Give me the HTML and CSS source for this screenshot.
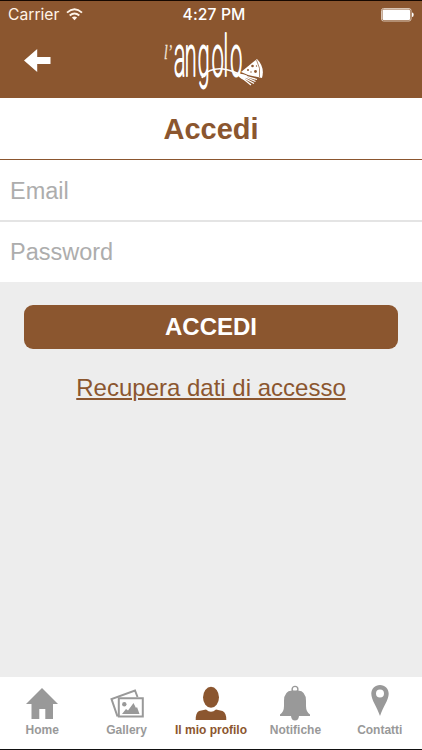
FILE: index.html
```html
<!DOCTYPE html>
<html lang="it">
<head>
<meta charset="utf-8">
<meta name="viewport" content="width=device-width, initial-scale=1">
<title>Accedi</title>
<link rel="stylesheet" href="styles.css">
</head>
<body>
<div class="app">
  <header class="header">
    <div class="status">
      <div class="carrier"><span>Carrier</span>
        <svg width="17" height="13" viewBox="0 0 17 13" fill="none" stroke="currentColor" stroke-width="1.9"><path d="M1 4.6Q8.500-1.900 16 4.600M3.700 7.500Q8.500 3.500 13.300 7.500"/><path d="M5.900 9.500Q8.500 7.400 11.100 9.500L8.500 12.200Z" fill="currentColor" stroke="none"/></svg>
      </div>
      <time class="clock">4:27 PM</time>
      <div class="battery"><svg width="33" height="14" viewBox="0 0 33 14"><rect x=".5" y=".5" width="29.500" height="12.500" rx="2" fill="none" stroke="#d9c5b5"/><rect x="1.500" y="1.500" width="27.500" height="10.500" rx="1" fill="#fff"/><path d="M31 4.500q1.700 0 1.700 2.250T31 9z" fill="#fff"/></svg></div>
    </div>
    <div class="navbar">
      <a class="back" href="#" aria-label="Indietro"><svg width="27" height="24" viewBox="0 0 27 24" fill="#fff"><path d="M0 11.500 13.200 0V8H26.500V15H13.200V23Z"/></svg></a>
      <svg class="logo" width="102" height="60" viewBox="0 0 102 60">
        <text class="logo-l" x="0" y="31" textLength="8" lengthAdjust="spacingAndGlyphs">l’</text>
        <text class="logo-name" transform="translate(0 48) scale(.37 1)" x="27 56 91 129 161 179">angolo</text>
        <path d="M38 50C41 43 50 40 59 41C66 42 72 44 79 48" fill="none" stroke="#fff" stroke-width="1.500"/>
        <path d="M77 44 93 31Q101 39 98 50L84 47Z" fill="#fff"/>
        <path d="M92.500 32Q97 40 95.500 49" fill="none" stroke="#8b562f" stroke-width=".7"/>
        <g fill="#8b562f"><circle cx="88.500" cy="38" r="1.300"/><circle cx="84" cy="42" r="1"/><circle cx="91.500" cy="43.500" r="1.400"/><circle cx="87" cy="44" r=".7"/><circle cx="92.500" cy="38" r=".7"/></g>
        <path d="M73 46Q78 45 83 47.500L80 52Q75 50 73 46Z" fill="#fff"/>
        <path d="M81 48 93 51.500M81 49 91.500 53.500M80 50 90 55.500M79.500 51 87 57" fill="none" stroke="#fff" stroke-width="1.300"/>
      </svg>
    </div>
  </header>
  <main class="content">
    <h1 class="title">Accedi</h1>
    <form class="form">
      <input class="field" type="email" placeholder="Email" aria-label="Email">
      <input class="field" type="password" placeholder="Password" aria-label="Password">
      <button class="submit" type="button">ACCEDI</button>
      <a class="recover" href="#">Recupera dati di accesso</a>
    </form>
  </main>
  <nav class="tabs">
    <a class="tab" href="#"><svg width="34" height="36" viewBox="0 0 34 36" fill="currentColor"><path d="M17 3 33 19H28V34H20.300V24H14.300V34H6.500V19H1Z"/></svg><span>Home</span></a>
    <a class="tab" href="#"><svg width="34" height="36" viewBox="0 0 34 36" fill="none" stroke="currentColor" stroke-width="2"><path d="M7.500 31.500 1.500 14 25 5.500 27.500 12"/><path d="M8.800 13.200H32.800V31.500H8.800Z"/><circle cx="14.300" cy="19.300" r="2.200" fill="currentColor" stroke="none"/><path d="M12 29 16 24 18 25.500 23.500 18 26 23 27 22 29.500 29Z" fill="currentColor" stroke="none"/></svg><span>Gallery</span></a>
    <a class="tab active" href="#"><svg width="34" height="36" viewBox="0 0 34 36" fill="currentColor"><ellipse cx="17" cy="12.300" rx="8" ry="10.500"/><path d="M1.700 35Q1.500 28 5 26L12 24.500Q17 29 22 24.500L28.500 26Q32.500 28 32.300 35Z"/></svg><span>Il mio profilo</span></a>
    <a class="tab" href="#"><svg width="34" height="36" viewBox="0 0 34 36" fill="currentColor"><circle cx="17" cy="4.300" r="2.900" fill="none" stroke="currentColor" stroke-width="1.400"/><path d="M2 31V29.500Q6 27 6 21V16Q6 6 14 5.500H20Q28 6 28 16V21Q28 27 32 29.500V31H21Q20.500 35.500 17 35.500T13 31Z"/></svg><span>Notifiche</span></a>
    <a class="tab" href="#"><svg width="34" height="36" viewBox="0 0 34 36" fill="currentColor"><path fill-rule="evenodd" d="M17 0C22 0 25.700 3.800 25.700 8.800C25.700 15 20 22 17 31C14 22 8.300 15 8.300 8.800C8.300 3.800 12 0 17 0ZM17 4.400A4 4 0 1 0 17 12.400A4 4 0 1 0 17 4.400Z"/></svg><span>Contatti</span></a>
  </nav>
</div>
</body>
</html>
```

FILE: styles.css
```css
* { box-sizing: border-box; }
body {
  margin: 0;
  font-family: "Liberation Sans", Arial, sans-serif;
  background: #ededed;
}
.app {
  height: 750px;
  display: flex;
  flex-direction: column;
  border-top: 1px solid #160800;
  border-bottom: 1px solid #111;
}
.header {
  height: 97px;
  background: #8b562f;
  color: #fff;
}
.status {
  height: 27px;
  padding: 0 8px;
  display: grid;
  grid-template-columns: 1fr auto 1fr;
  align-items: center;
  font-family: Inter, "Liberation Sans", sans-serif;
  font-size: 15.700px;
}
.carrier { display: flex; align-items: center; gap: 7px; color: #fff4e8; }
.clock { margin-left: 6px; font-weight: 500; font-size: 15.700px; letter-spacing: .1px; }
.battery { display: flex; justify-content: flex-end; }
.navbar {
  height: 62px;
  display: grid;
  grid-template-columns: 1fr 102px 1fr;
}
.back { padding: 21px 0 0 23.500px; }
.back svg { display: block; }
.logo { display: block; margin-left: 4px; overflow: visible; }
.logo-l { font: italic 20px "Liberation Serif", serif; fill: #f3e6da; stroke: #f3e6da; stroke-width: .3px; }
.logo-name {
  font: 200 58px Roboto, sans-serif;
  fill: #fff;
  stroke: #fff;
  stroke-width: 2px;
  stroke-linejoin: round;
}
.content { flex: 1; }
.title {
  height: 62px;
  margin: 0;
  background: #fff;
  border-bottom: 1px solid #8b562f;
  color: #8b562f;
  font-size: 29px;
  line-height: 63px;
  text-align: center;
}
.form { display: flex; flex-direction: column; }
.field {
  height: 61px;
  width: 100%;
  padding: 1px 10px 0;
  border: 0;
  border-radius: 0;
  background: #fff;
  font: 23.500px "Liberation Sans", Arial, sans-serif;
}
.field:first-child { height: 62px; padding-top: 2px; border-bottom: 2px solid #e4e4e4; }
.field:nth-child(2) { height: 60px; }
.field::placeholder { color: #adadad; opacity: 1; }
.submit {
  height: 44px;
  margin: 23px 24px 0;
  border: 0;
  border-radius: 9px;
  padding: 0;
  background: #8b562f;
  color: #fff;
  font: bold 24px "Liberation Sans", Arial, sans-serif;
}
.recover {
  align-self: center;
  margin-top: 25px;
  color: #8b562f;
  font-size: 24px;
  line-height: 28px;
  text-decoration-thickness: 1.500px;
  text-underline-offset: 2px;
}
.tabs {
  height: 72px;
  display: grid;
  grid-template-columns: repeat(5, 1fr);
  background: #fff;
}
.tab {
  display: flex;
  flex-direction: column;
  align-items: center;
  padding-top: 8px;
  color: #999;
  font-size: 12px;
  font-weight: bold;
  line-height: 16px;
  text-decoration: none;
  white-space: nowrap;
}
.tab svg { display: block; margin-bottom: 1px; }
.active { color: #8b562f; }
```
